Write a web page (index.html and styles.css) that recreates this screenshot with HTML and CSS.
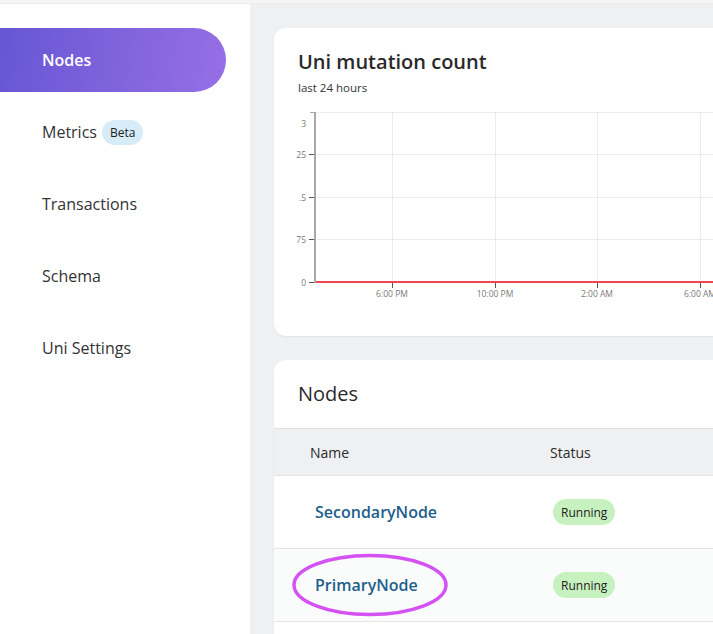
FILE: index.html
```html
<!DOCTYPE html>
<html>
<head>
<meta charset="utf-8">
<link rel="stylesheet" href="styles.css">
</head>
<body>
<div class="topbar"></div>
<div class="layout">
  <nav class="sidebar">
    <div class="nav-item"><span class="nav-pill active">Nodes</span></div>
    <div class="nav-item"><span class="nav-pill">Metrics <span class="beta">Beta</span></span></div>
    <div class="nav-item"><span class="nav-pill">Transactions</span></div>
    <div class="nav-item"><span class="nav-pill">Schema</span></div>
    <div class="nav-item"><span class="nav-pill">Uni Settings</span></div>
  </nav>
  <main class="main">
    <section class="card chart-card">
      <h2 class="card-title">Uni mutation count</h2>
      <div class="subtitle">last 24 hours</div>
      <svg class="chart" width="460" height="200" viewBox="0 0 460 200">
        <g stroke="#ececec" stroke-width="1">
          <line x1="42" y1="4.5" x2="460" y2="4.5"/>
          <line x1="42" y1="46.5" x2="460" y2="46.5"/>
          <line x1="42" y1="89.5" x2="460" y2="89.5"/>
          <line x1="42" y1="131.5" x2="460" y2="131.5"/>
          <line x1="118.5" y1="4" x2="118.5" y2="174"/>
          <line x1="221.5" y1="4" x2="221.5" y2="174"/>
          <line x1="323.5" y1="4" x2="323.5" y2="174"/>
          <line x1="426.5" y1="4" x2="426.5" y2="174"/>
        </g>
        <g stroke="#555" stroke-width="1">
          <line x1="35" y1="46.5" x2="40" y2="46.5"/>
          <line x1="35" y1="89.5" x2="40" y2="89.5"/>
          <line x1="35" y1="131.5" x2="40" y2="131.5"/>
          <line x1="35" y1="174.5" x2="40" y2="174.5"/>
          <line x1="118.5" y1="174" x2="118.5" y2="180"/>
          <line x1="221.5" y1="174" x2="221.5" y2="180"/>
          <line x1="323.5" y1="174" x2="323.5" y2="180"/>
          <line x1="426.5" y1="174" x2="426.5" y2="180"/>
        </g>
        <line x1="36" y1="4.5" x2="41" y2="4.5" stroke="#a8a8a8" stroke-width="1"/>
        <line x1="41" y1="4" x2="41" y2="175" stroke="#a8a8a8" stroke-width="2"/>
        <line x1="42" y1="174" x2="460" y2="174" stroke="#f0474f" stroke-width="2"/>
        <g class="ylab" text-anchor="end">
          <text x="32" y="19">3</text>
          <text x="32" y="50">25</text>
          <text x="32" y="93">.5</text>
          <text x="32" y="135">75</text>
          <text x="32" y="178">0</text>
        </g>
        <g class="xlab" text-anchor="middle">
          <text x="118" y="189">6:00 PM</text>
          <text x="221" y="189">10:00 PM</text>
          <text x="323" y="189">2:00 AM</text>
          <text x="426" y="189">6:00 AM</text>
        </g>
      </svg>
    </section>
    <section class="card nodes-card">
      <h2 class="card-title nodes-title">Nodes</h2>
      <div class="table">
        <div class="thead">
          <div class="col-name head-name">Name</div>
          <div class="col-status">Status</div>
        </div>
        <div class="trow">
          <div class="col-name"><a class="node-link">SecondaryNode</a></div>
          <div class="col-status"><span class="status">Running</span></div>
        </div>
        <div class="trow alt">
          <div class="col-name"><a class="node-link">PrimaryNode</a></div>
          <div class="col-status"><span class="status">Running</span></div>
          <svg class="circle" width="162" height="68" viewBox="0 0 162 68">
            <ellipse cx="81" cy="34" rx="76" ry="29.5" fill="none" stroke="#d452f2" stroke-width="3.5"/>
          </svg>
        </div>
      </div>
    </section>
  </main>
</div>
</body>
</html>
```
FILE: styles.css
```css
html, body {
  margin: 0;
  padding: 0;
  width: 713px;
  height: 634px;
  overflow: hidden;
}
body {
  font-family: "Open Sans", "Noto Sans", sans-serif;
  color: #2b2b2b;
  background: #eff0f2;
}
.topbar {
  height: 4px;
  background: #f5f5f6;
  border-bottom: 1px solid #ececee;
  box-sizing: border-box;
}
.layout {
  display: flex;
  height: 630px;
}
.sidebar {
  width: 250px;
  flex: none;
  background: #fff;
  padding-top: 20px;
  display: flex;
  flex-direction: column;
}
.nav-item {
  height: 72px;
  display: flex;
  align-items: center;
}
.nav-pill {
  display: flex;
  align-items: center;
  width: 226px;
  height: 64px;
  box-sizing: border-box;
  padding-left: 42px;
  font-size: 16px;
  color: #333;
  border-radius: 0 32px 32px 0;
}
.nav-pill.active {
  background: linear-gradient(100deg, #6656d4 0%, #7f63dc 50%, #966fe5 100%);
  color: #fff;
  font-weight: 600;
}
.beta {
  display: inline-flex;
  align-items: center;
  height: 25px;
  padding: 0 8px;
  margin-left: 5px;
  border-radius: 13px;
  background: #d6ecf8;
  color: #1d1d1d;
  font-size: 12px;
}
.main {
  flex: 1;
  padding: 24px 0 0 24px;
  display: flex;
  flex-direction: column;
  gap: 24px;
  min-width: 0;
}
.card {
  width: 520px;
  background: #fff;
  border-radius: 12px;
  box-shadow: 0 1px 2px rgba(0,0,0,0.06);
  flex: none;
}
.chart-card {
  height: 308px;
  padding: 20px 0 0 24px;
  box-sizing: border-box;
}
.card-title {
  margin: 0;
  font-size: 20px;
  font-weight: 600;
  line-height: 28px;
  color: #2a2a2a;
}
.subtitle {
  font-size: 11.5px;
  line-height: 16px;
  margin-top: 4px;
  color: #333;
}
.chart {
  display: block;
  margin: 12px 0 0 -24px;
}
.chart text {
  font-family: "Open Sans", sans-serif;
  font-size: 8.5px;
  fill: #7a7a7a;
}
.nodes-card {
  flex: 1;
  border-radius: 12px 12px 0 0;
}
.nodes-title {
  font-weight: 500;
  padding: 20px 24px 0;
  height: 69px;
  box-sizing: border-box;
  border-bottom: 1px solid #dfe0e3;
}
.thead {
  display: flex;
  align-items: center;
  height: 47px;
  padding-top: 1px;
  box-sizing: border-box;
  background: #eff0f2;
  font-size: 14px;
  font-weight: 500;
  color: #2b2b2b;
  border-bottom: 1px solid #e4e4e6;
}
.col-name {
  width: 276px;
  flex: none;
  padding-left: 41px;
  box-sizing: border-box;
}
.head-name {
  padding-left: 36px;
}
.col-status {
  flex: 1;
}
.trow {
  position: relative;
  display: flex;
  align-items: center;
  height: 72px;
  border-bottom: 1px solid #e6e6e6;
}
.trow.alt {
  background: #fafcfc;
}
.node-link {
  color: #1f5f8b;
  font-size: 16px;
  font-weight: 600;
}
.status {
  display: inline-flex;
  align-items: center;
  height: 26px;
  padding: 0 8px;
  margin-left: 3px;
  border-radius: 13px;
  background: #c7f1bf;
  color: #222;
  font-size: 12px;
}
.circle {
  position: absolute;
  left: 15px;
  top: 2px;
}
```
